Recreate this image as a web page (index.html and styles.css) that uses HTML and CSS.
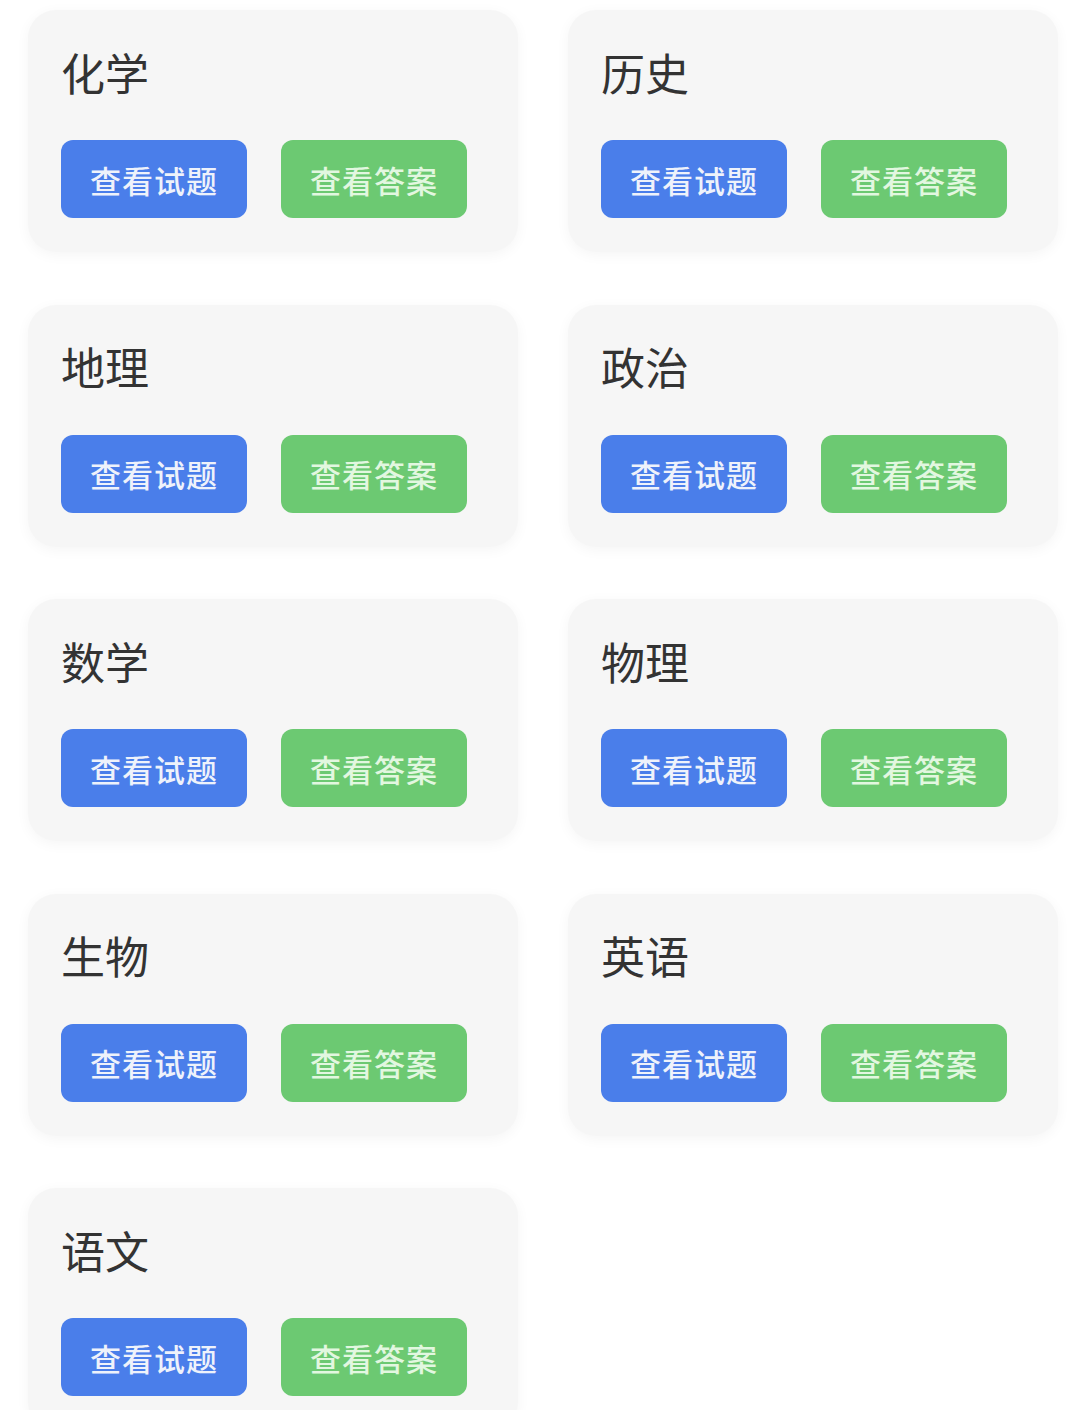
FILE: index.html
```html
<!DOCTYPE html>
<html lang="zh-CN">
<head>
<meta charset="utf-8">
<title>科目</title>
<link rel="stylesheet" href="styles.css">
</head>
<body>
<div class="grid">
  <div class="card"><div class="title">化学</div><div class="btns"><span class="btn blue">查看试题</span><span class="btn green">查看答案</span></div></div>
  <div class="card"><div class="title">历史</div><div class="btns"><span class="btn blue">查看试题</span><span class="btn green">查看答案</span></div></div>
  <div class="card"><div class="title">地理</div><div class="btns"><span class="btn blue">查看试题</span><span class="btn green">查看答案</span></div></div>
  <div class="card"><div class="title">政治</div><div class="btns"><span class="btn blue">查看试题</span><span class="btn green">查看答案</span></div></div>
  <div class="card"><div class="title">数学</div><div class="btns"><span class="btn blue">查看试题</span><span class="btn green">查看答案</span></div></div>
  <div class="card"><div class="title">物理</div><div class="btns"><span class="btn blue">查看试题</span><span class="btn green">查看答案</span></div></div>
  <div class="card"><div class="title">生物</div><div class="btns"><span class="btn blue">查看试题</span><span class="btn green">查看答案</span></div></div>
  <div class="card"><div class="title">英语</div><div class="btns"><span class="btn blue">查看试题</span><span class="btn green">查看答案</span></div></div>
  <div class="card"><div class="title">语文</div><div class="btns"><span class="btn blue">查看试题</span><span class="btn green">查看答案</span></div></div>
</div>
</body>
</html>
```

FILE: styles.css
```css
html, body {
  margin: 0;
  padding: 0;
  background: #ffffff;
  font-family: "Noto Sans CJK SC", "Noto Sans", sans-serif;
}
.grid {
  display: grid;
  grid-template-columns: 490px 490px;
  column-gap: 50px;
  row-gap: 52.5px;
  padding: 10px 0 0 28px;
}
.card {
  background: #f6f6f6;
  border-radius: 28px;
  box-shadow: 0 3px 14px rgba(0, 0, 0, 0.045);
  padding: 39.5px 33px 34px 33px;
  height: 242px;
  box-sizing: border-box;
}
.title {
  font-size: 44px;
  line-height: 44px;
  color: #333333;
  margin-bottom: 46.5px;
}
.btns {
  display: flex;
  gap: 34px;
}
.btn {
  width: 186px;
  height: 78px;
  border-radius: 12px;
  display: flex;
  align-items: center;
  justify-content: center;
  font-size: 31px;
  font-weight: 500;
  letter-spacing: 1px;
}
.blue {
  background: #4a7eea;
  color: #eef2fb;
}
.green {
  background: #6cc972;
  color: #e2f7e0;
}
```
